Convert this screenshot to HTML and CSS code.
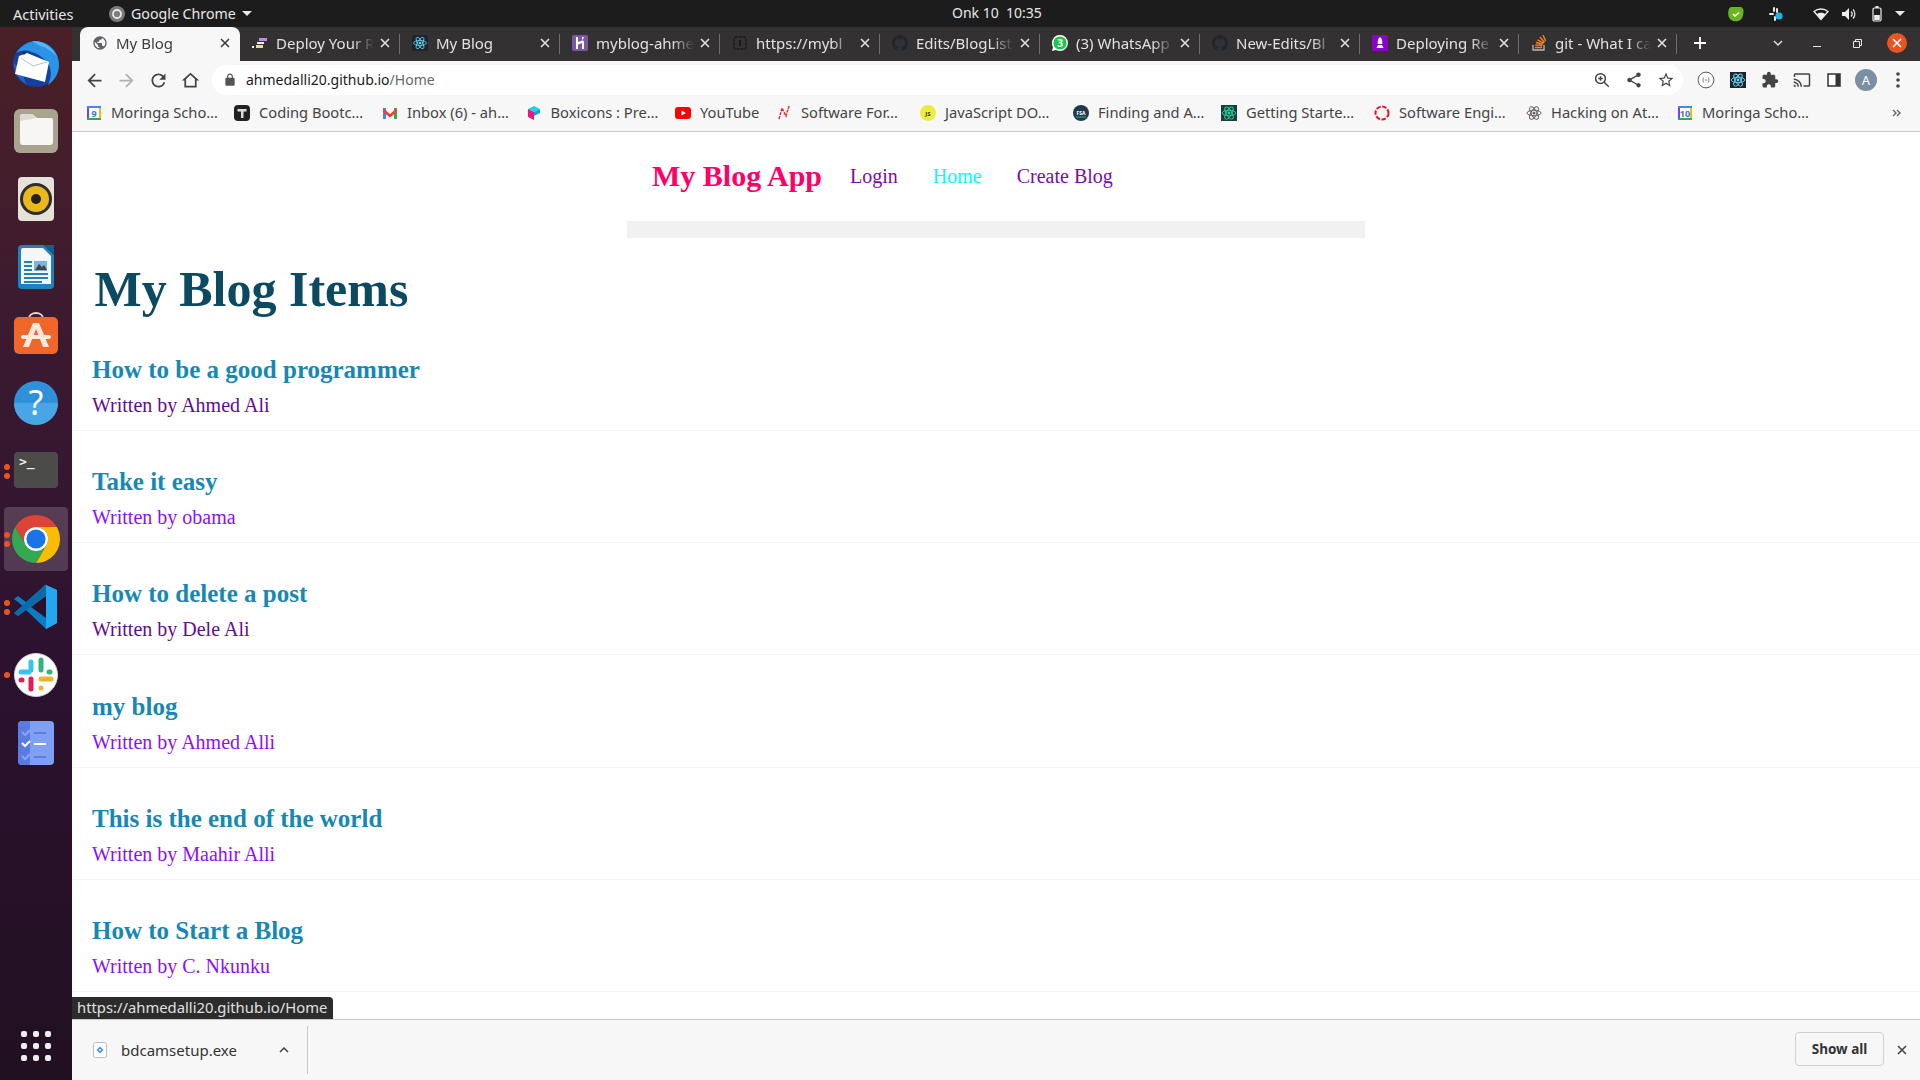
FILE: index.html
```html
<!DOCTYPE html>
<html lang="en">
<head>
<meta charset="utf-8">
<title>My Blog</title>
<link rel="stylesheet" href="styles.css">
</head>
<body>
<svg class="defs" width="0" height="0" aria-hidden="true">
  <symbol id="react" viewBox="0 0 16 16"><rect width="16" height="16" rx="2" fill="#20232a"/><g fill="none" stroke="#61dafb" stroke-width=".8"><ellipse cx="8" cy="8" rx="6.4" ry="2.5"/><ellipse cx="8" cy="8" rx="6.4" ry="2.5" transform="rotate(60 8 8)"/><ellipse cx="8" cy="8" rx="6.4" ry="2.5" transform="rotate(120 8 8)"/></g><circle cx="8" cy="8" r="1.3" fill="#61dafb"/></symbol>
  <symbol id="x" viewBox="0 0 10 10"><path d="M1 1l8 8M9 1L1 9" fill="none" stroke="currentColor" stroke-width="1.6"/></symbol>
  <symbol id="octo" viewBox="0 0 16 16"><path fill="#1d2730" d="M8 0C3.58 0 0 3.58 0 8c0 3.54 2.29 6.53 5.47 7.59.4.07.55-.17.55-.38 0-.19-.01-.82-.01-1.49-2.01.37-2.53-.49-2.69-.94-.09-.23-.48-.94-.82-1.13-.28-.15-.68-.52-.01-.53.63-.01 1.08.58 1.23.82.72 1.21 1.87.87 2.33.66.07-.52.28-.87.51-1.07-1.78-.2-3.64-.89-3.64-3.95 0-.87.31-1.59.82-2.15-.08-.2-.36-1.02.08-2.12 0 0 .67-.21 2.2.82.64-.18 1.32-.27 2-.27.68 0 1.36.09 2 .27 1.53-1.04 2.2-.82 2.2-.82.44 1.1.16 1.92.08 2.12.51.56.82 1.27.82 2.15 0 3.07-1.87 3.75-3.65 3.95.29.25.54.73.54 1.48 0 1.07-.01 1.93-.01 2.2 0 .21.15.46.55.38A8.013 8.013 0 0 0 16 8c0-4.42-3.58-8-8-8z"/></symbol>
  <symbol id="cal" viewBox="0 0 16 16"><rect x="1" y="1" width="14" height="14" fill="#fff"/><path d="M1 1h14v2H1z" fill="#4285f4"/><path d="M1 13h14v2H1z" fill="#34a853"/><path d="M13 3h2v10h-2z" fill="#fbbc04"/><path d="M1 3h2v10H1z" fill="#7b3ff2"/></symbol>
</svg>

<header class="topbar">
  <span class="activities">Activities</span>
  <span class="app-menu">
    <svg class="app-icon" viewBox="0 0 16 16"><circle cx="8" cy="8" r="8" fill="#7b7b7b"/><circle cx="8" cy="8" r="4" fill="none" stroke="#e8e8e8" stroke-width="1.8"/></svg>
    <span class="app-name">Google Chrome</span>
    <span class="caret"></span>
  </span>
  <time class="clock">Onk 10&nbsp;&nbsp;10:35</time>
  <span class="tray">
    <svg class="tray-green" viewBox="0 0 16 16"><path d="M3 1h9c2 0 4 2 3.5 5-.5 4-1 8-5.5 9-4 .8-8.5-.5-9.5-5C0 7 0 2 3 1z" fill="#6cb324"/><path d="M5 8l2 2 4-3.5" fill="none" stroke="#fff" stroke-width="1.6"/></svg>
    <svg class="tray-slack" viewBox="0 0 16 16"><g fill="#e8e8e8"><rect x="5" y="1" width="2" height="5" rx="1"/><rect x="1" y="7" width="5" height="2" rx="1"/><rect x="8" y="2" width="2" height="5" rx="1"/><rect x="6" y="10" width="2" height="5" rx="1"/></g><circle cx="11" cy="10" r="3.6" fill="#1cb6e8"/></svg>
    <svg class="tray-wifi" viewBox="0 0 16 14"><path d="M8 12.5L1 4.5C3 2.7 5.5 2 8 2s5 .7 7 2.5z" fill="none" stroke="#eee" stroke-width="1.3"/><path d="M8 12.5L3.8 7.2C5 6.2 6.5 5.8 8 5.8s3 .4 4.2 1.4z" fill="#eee"/></svg>
    <svg class="tray-vol" viewBox="0 0 16 16"><path d="M1 6h3l4-4v12l-4-4H1z" fill="#eee"/><path d="M10 5.5c1.4 1.4 1.4 3.6 0 5M12 3.5c2.5 2.5 2.5 6.5 0 9" fill="none" stroke="#eee" stroke-width="1.2"/></svg>
    <svg class="tray-bat" viewBox="0 0 10 16"><rect x="1" y="2" width="8" height="13" rx="1.2" fill="none" stroke="#eee" stroke-width="1.2"/><rect x="3.5" y="0" width="3" height="2" fill="#eee"/><rect x="2.2" y="9" width="5.6" height="5" fill="#eee"/></svg>
    <span class="caret tray-caret"></span>
  </span>
</header>

<div class="desktop">
  <nav class="dock">
    <div class="dock-item">
      <svg viewBox="0 0 48 48"><circle cx="24" cy="25" r="23" fill="#15409f"/><path d="M4 14C10 5 20 0 29 3c11 3 18 12 18 23 0 8-4 15-11 20 3-7 4-13 1-20-4-7-12-12-20-14-5-1-10 0-13 2z" fill="#2a93e6"/><path d="M20 2c11-1 21 6 25 16-5-6-12-10-17-11z" fill="#55b6f2"/><path d="M2 24c0 10 5 17 13 22-3-5-4-10-4-14z" fill="#1f63c8"/><path d="M7 17l8-3 22 9-4 20-30-8z" fill="#fff"/><path d="M9 19l12 8 14-4" fill="none" stroke="#aeb6c4" stroke-width=".9"/><circle cx="12" cy="14" r="1.6" fill="#0b2e78"/></svg>
    </div>
    <div class="dock-item">
      <svg viewBox="0 0 48 48"><rect x="2" y="2" width="44" height="44" rx="6" fill="#a9a48f"/><path d="M8 10a3 3 0 0 1 3-3h9l5 4h14a2 2 0 0 1 2 2v22a3 3 0 0 1-3 3H11a3 3 0 0 1-3-3z" fill="#f7f6f4"/><path d="M8 14l0-4a3 3 0 0 1 3-3h9l5 4z" fill="#dedad0"/></svg>
    </div>
    <div class="dock-item">
      <svg viewBox="0 0 48 48"><rect x="6" y="2" width="36" height="44" rx="4" fill="#e6e2d8"/><circle cx="24" cy="24" r="16" fill="#2e2e2e"/><circle cx="24" cy="24" r="13" fill="#e9b81c"/><circle cx="24" cy="24" r="5" fill="#222"/></svg>
    </div>
    <div class="dock-item">
      <svg viewBox="0 0 48 48"><path d="M10 2h22l10 10v30a4 4 0 0 1-4 4H10a4 4 0 0 1-4-4V6a4 4 0 0 1 4-4z" fill="#1e83b8"/><path d="M11 5h20l8 8v28H9V7a2 2 0 0 1 2-2z" fill="#f4f6f8"/><path d="M32 2h10v10z" fill="#135f8c"/><path fill="#1e83b8" d="M12 18h8v2h-8zM12 22h8v2h-8zM12 26h8v2h-8zM12 30h24v2H12zM12 34h24v2H12zM12 38h18v2H12z"/><rect x="22" y="18" width="13" height="10" fill="#7bb4dc"/><path d="M23 27l4-6 3 3 2-2 3 5z" fill="#444"/></svg>
    </div>
    <div class="dock-item">
      <svg viewBox="0 0 48 48"><path d="M17 8c0-8 14-8 14 0" fill="none" stroke="#f4d5b5" stroke-width="2"/><rect x="2" y="6" width="44" height="37" rx="5" fill="#f0662b"/><path d="M21 12h6l10 24h-6l-7-18-7 18h-6z" fill="#fde8dc"/><rect x="9" y="24" width="30" height="4" rx="2" fill="#fde8dc"/></svg>
    </div>
    <div class="dock-item">
      <svg viewBox="0 0 48 48"><circle cx="24" cy="24" r="22" fill="#2f8fd8"/><path d="M2 24a22 22 0 0 0 44 0z" fill="#48a5e6"/><text class="help-mark" x="24" y="36" text-anchor="middle">?</text></svg>
    </div>
    <div class="dock-item">
      <span class="dots dots-two"></span>
      <svg viewBox="0 0 48 48"><rect x="2" y="5" width="44" height="36" rx="4" fill="#4b4b49"/><text class="term-mark" x="7" y="19">&gt;_</text></svg>
    </div>
    <div class="dock-item active">
      <span class="dots dots-two"></span>
      <svg viewBox="0 0 48 48"><path fill="#db4437" d="M24 0a24 24 0 0 1 20.78 12H24a12 12 0 0 0-10.39 18L3.22 12A24 24 0 0 1 24 0z"/><path fill="#fbbc04" d="M44.78 12A24 24 0 0 1 24 48l10.39-18A12 12 0 0 0 24 12z"/><path fill="#34a853" d="M3.22 12A24 24 0 0 0 24 48l10.39-18a12 12 0 0 1-20.78 0z"/><circle cx="24" cy="24" r="12" fill="#fff"/><circle cx="24" cy="24" r="9.6" fill="#1a73e8"/></svg>
    </div>
    <div class="dock-item">
      <span class="dots dots-two"></span>
      <svg viewBox="0 0 48 48"><path d="M34 2l11 5v33l-11 6-20-19-8 6-4-3 9-7-9-7 4-3 8 6z" fill="#0a7cc4"/><path d="M34 2l11 5v33l-11 6z" fill="#23a7f0"/><path d="M34 13L19 24l15 11z" fill="#2c0f2c"/><path d="M6 33l-4-3 32-29v11z" fill="#0b6aa8"/></svg>
    </div>
    <div class="dock-item">
      <span class="dots dots-one"></span>
      <svg viewBox="0 0 48 48"><circle cx="24" cy="24" r="21.5" fill="#fff" stroke="#d9d4d9" stroke-width="1"/><g stroke-width="5" stroke-linecap="round" fill="none"><path d="M19 11v8" stroke="#36c5f0"/><path d="M9 21h8" stroke="#36c5f0"/><path d="M29 9v10" stroke="#2eb67d"/><path d="M38 21h-1" stroke="#2eb67d"/><path d="M29 28h10" stroke="#ecb22e"/><path d="M29 37v0" stroke="#ecb22e"/><path d="M19 28v10" stroke="#e01e5a"/><path d="M9 29h1" stroke="#e01e5a"/></g></svg>
    </div>
    <div class="dock-item">
      <svg viewBox="0 0 48 48"><rect x="6" y="2" width="36" height="44" rx="4" fill="#7f9ff2"/><path d="M10 2h8v44h-8a4 4 0 0 1-4-4V6a4 4 0 0 1 4-4z" fill="#5a7be0"/><g fill="none" stroke-width="2"><path d="M10 13l3 3 5-5M10 37l3 3 5-5" stroke="#8aa5ef"/><path d="M10 24l3 3 5-5" stroke="#fff"/></g><path d="M22 14h12M22 38h12" stroke="#5a7be0" stroke-width="2"/><path d="M22 25h12" stroke="#fff" stroke-width="2"/></svg>
    </div>
    <div class="dock-grid">
      <i></i><i></i><i></i><i></i><i></i><i></i><i></i><i></i><i></i>
    </div>
  </nav>

  <div class="browser">
    <div class="tabstrip">
      <div class="tab active-tab">
        <svg class="fav" viewBox="0 0 24 24"><path fill="#5f6368" d="M12 2C6.48 2 2 6.48 2 12s4.48 10 10 10 10-4.48 10-10S17.52 2 12 2zm-1 17.93c-3.95-.49-7-3.85-7-7.93 0-.62.08-1.21.21-1.79L9 15v1c0 1.1.9 2 2 2v1.93zm6.9-2.54c-.26-.81-1-1.39-1.9-1.39h-1v-3c0-.55-.45-1-1-1H8v-2h2c.55 0 1-.45 1-1V7h2c1.1 0 2-.9 2-2v-.41c2.93 1.19 5 4.06 5 7.41 0 2.08-.8 3.97-2.1 5.39z"/></svg>
        <span class="tab-title">My Blog</span>
        <svg class="tab-x"><use href="#x"/></svg>
      </div>
      <div class="tab">
        <svg class="fav" viewBox="0 0 16 16"><rect x="7" y="3" width="8" height="3" fill="#b58cf0"/><rect x="5" y="7" width="7" height="2" fill="#eee"/><rect x="4" y="10" width="7" height="3" fill="#e9d6a0"/><rect x="0" y="11" width="2" height="2" fill="#eee"/></svg>
        <span class="tab-title">Deploy Your R</span>
        <svg class="tab-x"><use href="#x"/></svg>
      </div>
      <div class="tab">
        <svg class="fav"><use href="#react"/></svg>
        <span class="tab-title">My Blog</span>
        <svg class="tab-x"><use href="#x"/></svg>
      </div>
      <div class="tab">
        <svg class="fav" viewBox="0 0 16 16"><rect width="16" height="16" rx="2" fill="#79589f"/><path d="M4 2h2v5l4-1.5c1-.3 2 .4 2 1.5v7h-2V8L6 9.5V14H4zM10 2h2l-1 2.5h-1z" fill="#fff"/></svg>
        <span class="tab-title">myblog-ahme</span>
        <svg class="tab-x"><use href="#x"/></svg>
      </div>
      <div class="tab">
        <svg class="fav" viewBox="0 0 16 16"><path d="M3 2h10l1 2v8l-1 2H3l-1-2V4z" fill="none" stroke="#111" stroke-width="1" stroke-dasharray="3 1"/><path d="M8 5v6" stroke="#111" stroke-width="1.5"/></svg>
        <span class="tab-title">https://mybl</span>
        <svg class="tab-x"><use href="#x"/></svg>
      </div>
      <div class="tab">
        <svg class="fav"><use href="#octo"/></svg>
        <span class="tab-title">Edits/BlogList</span>
        <svg class="tab-x"><use href="#x"/></svg>
      </div>
      <div class="tab">
        <svg class="fav" viewBox="0 0 16 16"><path d="M8 0a8 8 0 0 1 0 16c-1.5 0-2.8-.4-4-1l-4 1 1-4A8 8 0 0 1 8 0z" fill="#fff"/><circle cx="8" cy="8" r="6.6" fill="#19c84b"/><text class="wa-num" x="8" y="11.5" text-anchor="middle">3</text></svg>
        <span class="tab-title">(3) WhatsApp</span>
        <svg class="tab-x"><use href="#x"/></svg>
      </div>
      <div class="tab">
        <svg class="fav"><use href="#octo"/></svg>
        <span class="tab-title">New-Edits/Bl</span>
        <svg class="tab-x"><use href="#x"/></svg>
      </div>
      <div class="tab">
        <svg class="fav" viewBox="0 0 16 16"><rect width="16" height="16" fill="#8a05be"/><path d="M8 2c2 1.5 2.5 4 2.3 7H5.7C5.5 6 6 3.5 8 2zM6 10h4l1.5 3h-7z" fill="#fff"/></svg>
        <span class="tab-title">Deploying Re</span>
        <svg class="tab-x"><use href="#x"/></svg>
      </div>
      <div class="tab">
        <svg class="fav" viewBox="0 0 16 16"><path d="M2 10v5h11v-5" fill="none" stroke="#bcbbbb" stroke-width="1.3"/><path d="M4 12.5h7M4.3 10l7 .6M5 7.5l6.8 1.8M6.5 4.8l6.2 3.4M9 2l4.5 5.3M12 0l2.7 6" fill="none" stroke="#f48024" stroke-width="1.4"/></svg>
        <span class="tab-title">git - What I ca</span>
        <svg class="tab-x"><use href="#x"/></svg>
      </div>
      <svg class="new-tab" viewBox="0 0 12 12"><path d="M6 0v12M0 6h12" stroke="#fff" stroke-width="1.8"/></svg>
      <div class="win-controls">
        <svg class="win-chev" viewBox="0 0 10 6"><path d="M1 1l4 4 4-4" fill="none" stroke="#e8e8e8" stroke-width="1.3"/></svg>
        <span class="win-min"></span>
        <svg class="win-restore" viewBox="0 0 9 9"><path d="M.5 2.5h6v6h-6zM2.5 2.5v-2h6v6h-2" fill="none" stroke="#e8e8e8" stroke-width="1"/></svg>
        <span class="win-close"><svg viewBox="0 0 10 10"><use href="#x"/></svg></span>
      </div>
    </div>

    <div class="toolbar">
      <span class="tbtn nav-btn"><svg viewBox="0 0 24 24"><path fill="#444" d="M20 11H7.83l5.59-5.59L12 4l-8 8 8 8 1.41-1.41L7.83 13H20v-2z"/></svg></span>
      <span class="tbtn nav-btn"><svg viewBox="0 0 24 24"><path fill="#b0b0b0" d="M12 4l-1.41 1.41L16.17 11H4v2h12.17l-5.58 5.59L12 20l8-8z"/></svg></span>
      <span class="tbtn nav-btn"><svg viewBox="0 0 24 24"><path fill="#444" d="M17.65 6.35A7.96 7.96 0 0 0 12 4c-4.42 0-7.99 3.58-7.99 8s3.57 8 7.99 8c3.73 0 6.84-2.55 7.73-6h-2.08A5.99 5.99 0 0 1 12 18c-3.31 0-6-2.69-6-6s2.69-6 6-6c1.66 0 3.14.69 4.22 1.78L13 11h7V4l-2.35 2.35z"/></svg></span>
      <span class="tbtn nav-btn"><svg viewBox="0 0 24 24"><path fill="#444" fill-rule="evenodd" d="M12 3L2 12h3v8h14v-8h3L12 3zm0 2.7l5 4.5V18H7v-7.8l5-4.5z"/></svg></span>
      <div class="omnibox">
        <svg class="lock" viewBox="0 0 24 24"><path fill="#555" d="M18 8h-1V6c0-2.76-2.24-5-5-5S7 3.24 7 6v2H6c-1.1 0-2 .9-2 2v10c0 1.1.9 2 2 2h12c1.1 0 2-.9 2-2V10c0-1.1-.9-2-2-2zM9 8V6c0-1.66 1.34-3 3-3s3 1.34 3 3v2H9z"/></svg>
        <span class="url">ahmedalli20.github.io<span class="url-path">/Home</span></span>
        <span class="tbtn omni-first"><svg viewBox="0 0 24 24"><g fill="none" stroke="#444" stroke-width="2"><circle cx="10" cy="10" r="6.5"/><path d="M15 15l6 6M10 7v6M7 10h6"/></g></svg></span>
        <span class="tbtn"><svg viewBox="0 0 24 24"><path fill="#444" d="M18 16.08c-.76 0-1.44.3-1.96.77L8.91 12.7c.05-.23.09-.46.09-.7s-.04-.47-.09-.7l7.05-4.11c.54.5 1.25.81 2.04.81 1.66 0 3-1.34 3-3s-1.34-3-3-3-3 1.34-3 3c0 .24.04.47.09.7L8.04 9.81C7.5 9.31 6.79 9 6 9c-1.66 0-3 1.34-3 3s1.34 3 3 3c.79 0 1.5-.31 2.04-.81l7.12 4.16c-.05.21-.08.43-.08.65 0 1.61 1.31 2.92 2.92 2.92s2.92-1.31 2.92-2.92-1.31-2.92-2.92-2.92z"/></svg></span>
        <span class="tbtn"><svg viewBox="0 0 24 24"><path fill="#444" d="M22 9.24l-7.19-.62L12 2 9.19 8.63 2 9.24l5.46 4.73L5.82 21 12 17.27 18.18 21l-1.63-7.03L22 9.24zM12 15.4l-3.76 2.27 1-4.28-3.32-2.88 4.38-.38L12 6.1l1.71 4.04 4.38.38-3.32 2.88 1 4.28L12 15.4z"/></svg></span>
      </div>
      <div class="extensions">
        <span class="tbtn"><svg viewBox="0 0 24 24"><circle cx="12" cy="12" r="10.5" fill="#fff" stroke="#555" stroke-width="1.3"/><path d="M9.5 8.5c-1.5 0-1 3.5-2 3.5 1 0 .5 3.5 2 3.5M14.5 8.5c1.5 0 1 3.5 2 3.5-1 0-.5 3.5-2 3.5M10.5 12h3" fill="none" stroke="#555" stroke-width="1"/></svg></span>
        <span class="tbtn small-btn"><svg viewBox="0 0 16 16"><rect width="16" height="16" fill="#20232a"/><g fill="none" stroke="#61dafb" stroke-width=".9"><ellipse cx="8" cy="8" rx="6.8" ry="2.7"/><ellipse cx="8" cy="8" rx="6.8" ry="2.7" transform="rotate(60 8 8)"/><ellipse cx="8" cy="8" rx="6.8" ry="2.7" transform="rotate(120 8 8)"/></g><circle cx="8" cy="8" r="1.4" fill="#61dafb"/></svg></span>
        <span class="tbtn"><svg viewBox="0 0 24 24"><path fill="#444" d="M20.5 11H19V7c0-1.1-.9-2-2-2h-4V3.5C13 2.12 11.88 1 10.5 1S8 2.12 8 3.5V5H4c-1.1 0-1.99.9-1.99 2v3.8H3.5c1.49 0 2.7 1.21 2.7 2.7s-1.21 2.7-2.7 2.7H2V20c0 1.1.9 2 2 2h3.8v-1.5c0-1.49 1.21-2.7 2.7-2.7 1.49 0 2.7 1.21 2.7 2.7V22H17c1.1 0 2-.9 2-2v-4h1.5c1.38 0 2.5-1.12 2.5-2.5S21.88 11 20.5 11z"/></svg></span>
        <span class="tbtn"><svg viewBox="0 0 24 24"><path fill="#444" d="M21 3H3c-1.1 0-2 .9-2 2v3h2V5h18v14h-7v2h7c1.1 0 2-.9 2-2V5c0-1.1-.9-2-2-2zM1 18v3h3c0-1.66-1.34-3-3-3zm0-4v2c2.76 0 5 2.24 5 5h2c0-3.87-3.13-7-7-7zm0-4v2c4.97 0 9 4.03 9 9h2c0-6.08-4.93-11-11-11z"/></svg></span>
        <span class="tbtn"><svg viewBox="0 0 24 24"><rect x="3" y="3" width="18" height="18" fill="#333"/><rect x="5" y="5" width="9" height="14" fill="#fff"/></svg></span>
        <span class="tbtn"><span class="avatar">A</span></span>
        <span class="tbtn"><svg viewBox="0 0 24 24"><g fill="#444"><circle cx="12" cy="4" r="2.4"/><circle cx="12" cy="12" r="2.4"/><circle cx="12" cy="20" r="2.4"/></g></svg></span>
      </div>
    </div>

    <div class="bookmarks">
      <a class="bm"><svg viewBox="0 0 16 16"><use href="#cal"/><text class="cal-num" x="8" y="12" text-anchor="middle">9</text></svg><span>Moringa Scho…</span></a>
      <a class="bm"><svg viewBox="0 0 16 16"><rect width="16" height="16" rx="4" fill="#222"/><path d="M3.5 4h9v2.5h-3V13H7V6.5H3.5z" fill="#ddd"/></svg><span>Coding Bootc…</span></a>
      <a class="bm"><svg viewBox="0 0 16 16"><path d="M1 3h3v11H1z" fill="#4285f4"/><path d="M12 3h3v11h-3z" fill="#34a853"/><path d="M1 3l7 6 7-6v4l-7 5.5L1 7z" fill="#ea4335"/></svg><span>Inbox (6) - ah…</span></a>
      <a class="bm"><svg viewBox="0 0 16 16"><path d="M2 4l6-3 6 3-6 3z" fill="#19d3e8"/><path d="M2 4l6 3v8L2 12z" fill="#f0157d"/><path d="M8 7l6-3v4l-6 3z" fill="#0ea5c9"/></svg><span>Boxicons : Pre…</span></a>
      <a class="bm"><svg viewBox="0 0 16 16"><rect y="2" width="16" height="12" rx="3" fill="#f00"/><path d="M6.5 5.5L11 8l-4.5 2.5z" fill="#fff"/></svg><span>YouTube</span></a>
      <a class="bm"><svg viewBox="0 0 16 16"><path d="M3 14l3-11 4 8 3-10" fill="none" stroke="#e5322d" stroke-width="1.5" stroke-dasharray="3 1"/></svg><span>Software For…</span></a>
      <a class="bm"><svg viewBox="0 0 16 16"><circle cx="8" cy="8" r="8" fill="#ecec3f"/><text class="js-num" x="8" y="10.5" text-anchor="middle">JS</text></svg><span>JavaScript DO…</span></a>
      <a class="bm"><svg viewBox="0 0 16 16"><circle cx="8" cy="8" r="8" fill="#22384f"/><text class="js-num fsa" x="8" y="10" text-anchor="middle">FSA</text><path d="M3 12h10" stroke="#2bb673" stroke-width="1"/></svg><span>Finding and A…</span></a>
      <a class="bm"><svg viewBox="0 0 16 16"><rect width="16" height="16" fill="#1f3b3a"/><g fill="none" stroke="#1fd6a0" stroke-width=".9"><ellipse cx="8" cy="8" rx="6.8" ry="2.7"/><ellipse cx="8" cy="8" rx="6.8" ry="2.7" transform="rotate(60 8 8)"/><ellipse cx="8" cy="8" rx="6.8" ry="2.7" transform="rotate(120 8 8)"/></g><circle cx="8" cy="8" r="1.4" fill="#1fd6a0"/></svg><span>Getting Starte…</span></a>
      <a class="bm"><svg viewBox="0 0 16 16"><circle cx="8" cy="8" r="6.5" fill="none" stroke="#e6141e" stroke-width="2" stroke-dasharray="4.5 1.5"/></svg><span>Software Engi…</span></a>
      <a class="bm"><svg viewBox="0 0 16 16"><g fill="none" stroke="#6b5f5f" stroke-width="1"><ellipse cx="8" cy="8" rx="7" ry="2.8"/><ellipse cx="8" cy="8" rx="7" ry="2.8" transform="rotate(60 8 8)"/><ellipse cx="8" cy="8" rx="7" ry="2.8" transform="rotate(120 8 8)"/></g><circle cx="8" cy="8" r="1.5" fill="#6b5f5f"/></svg><span>Hacking on At…</span></a>
      <a class="bm"><svg viewBox="0 0 16 16"><use href="#cal"/><text class="cal-num" x="8" y="12" text-anchor="middle">10</text></svg><span>Moringa Scho…</span></a>
      <svg class="bm-more" viewBox="0 0 10 8"><path d="M1 1l3 3-3 3M5 1l3 3-3 3" fill="none" stroke="#666" stroke-width="1.4"/></svg>
    </div>

    <main class="page">
      <div class="site-nav">
        <div class="nav-row">
          <span class="brand">My Blog App</span>
          <a class="nav-link login">Login</a>
          <a class="nav-link home">Home</a>
          <a class="nav-link create">Create Blog</a>
        </div>
        <div class="nav-bar"></div>
      </div>
      <h1 class="page-title">My Blog Items</h1>
      <ul class="posts">
        <li class="post"><h2>How to be a good programmer</h2><p class="visited">Written by Ahmed Ali</p></li>
        <li class="post"><h2>Take it easy</h2><p>Written by obama</p></li>
        <li class="post"><h2>How to delete a post</h2><p class="visited">Written by Dele Ali</p></li>
        <li class="post"><h2>my blog</h2><p>Written by Ahmed Alli</p></li>
        <li class="post"><h2>This is the end of the world</h2><p>Written by Maahir Alli</p></li>
        <li class="post"><h2>How to Start a Blog</h2><p>Written by C. Nkunku</p></li>
      </ul>
    </main>

    <div class="status-bubble">https://ahmedalli20.github.io/Home</div>

    <footer class="shelf">
      <svg class="file-icon" viewBox="0 0 14 16"><rect x=".5" y=".5" width="13" height="15" rx="2" fill="#fff" stroke="#bbb"/><path d="M7 4.5l3.5 3.5L7 11.5 3.5 8z" fill="#4d90e8"/><circle cx="7" cy="8" r="1" fill="#fff"/></svg>
      <span class="file-name">bdcamsetup.exe</span>
      <svg class="file-caret" viewBox="0 0 10 6"><path d="M1 5l4-4 4 4" fill="none" stroke="#444" stroke-width="1.5"/></svg>
      <span class="shelf-sep"></span>
      <button class="show-all">Show all</button>
      <svg class="shelf-x"><use href="#x"/></svg>
    </footer>
  </div>
</div>
</body>
</html>
```

FILE: styles.css
```css
* { box-sizing: border-box; }
html, body { margin: 0; height: 100%; overflow: hidden; }
body {
  width: 1920px;
  height: 1080px;
  display: flex;
  flex-direction: column;
  font-family: "Noto Sans", "DejaVu Sans", sans-serif;
  background: #fff;
}
.defs { position: absolute; }
svg { display: block; flex: none; }

/* GNOME top bar */
.topbar {
  height: 27px;
  flex: none;
  background: #1c1c1c;
  color: #e8e8e8;
  display: flex;
  align-items: center;
  font-size: 14px;
  padding-left: 13px;
  position: relative;
}
.activities { width: 96px; font-size: 14.5px; }
.app-menu { display: flex; align-items: center; }
.app-icon { width: 16px; height: 16px; margin-right: 6px; }
.app-name { font-size: 14.2px; }
.caret {
  width: 0; height: 0;
  border-left: 5px solid transparent;
  border-right: 5px solid transparent;
  border-top: 5px solid #e8e8e8;
  margin-left: 6px;
}
.clock {
  position: absolute;
  left: 952px;
  top: 3px;
  white-space: nowrap;
}
.tray {
  position: absolute;
  right: 0; top: 0;
  height: 27px;
  display: flex;
  align-items: center;
}
.tray-green { width: 16px; height: 16px; margin-right: 24px; }
.tray-slack { width: 16px; height: 16px; margin-right: 29px; }
.tray-wifi { width: 16px; height: 14px; margin-right: 12px; }
.tray-vol { width: 16px; height: 16px; margin-right: 15px; }
.tray-bat { width: 10px; height: 16px; }
.tray-caret { margin-left: 13px; margin-right: 15px; }

.desktop { flex: 1; display: flex; min-height: 0; }

/* Dock */
.dock {
  width: 72px;
  flex: none;
  background: linear-gradient(180deg, #4a2027 0%, #3b1a30 30%, #2c1230 60%, #211021 100%);
  display: flex;
  flex-direction: column;
  align-items: center;
  padding-top: 2px;
  position: relative;
}
.dock-item {
  width: 64px;
  height: 68px;
  flex: none;
  display: flex;
  align-items: center;
  justify-content: center;
  position: relative;
  border-radius: 4px;
}
.dock-item svg { width: 48px; height: 48px; }
.dock-item.active { background: rgba(255, 255, 255, .17); height: 64px; margin: 2px 0; }
.dots { position: absolute; left: 0; top: 50%; width: 6px; }
.dots::before, .dots::after {
  content: "";
  position: absolute;
  left: 0;
  width: 6px; height: 6px;
  border-radius: 50%;
  background: #e95420;
}
.dots-two::before { top: -7px; }
.dots-two::after { top: 2px; }
.dots-one::before { top: -3px; }
.dots-one::after { display: none; }
.help-mark { font: 400 34px "Noto Sans", sans-serif; fill: #fff; }
.term-mark { font: 700 13px "DejaVu Sans Mono", monospace; fill: #eee; }
.dock-grid {
  margin-top: auto;
  margin-bottom: 19px;
  display: grid;
  grid-template-columns: repeat(3, 6px);
  gap: 6px;
}
.dock-grid i { width: 6px; height: 6px; background: #eee; border-radius: 2px; display: block; }

/* Browser */
.browser {
  flex: 1;
  min-width: 0;
  display: flex;
  flex-direction: column;
  position: relative;
}
.tabstrip {
  height: 34px;
  flex: none;
  background: #333132;
  display: flex;
  padding-left: 8px;
  align-items: stretch;
}
.tab {
  width: 160px;
  flex: none;
  display: flex;
  align-items: center;
  padding: 0 10px 2px 12px;
  color: #e2e2e2;
  font-size: 15px;
  position: relative;
}
.tab:nth-child(9) { width: 159px; }
.tab:nth-child(10) { width: 158px; }
.tab::after {
  content: "";
  position: absolute;
  right: 0; top: 7px; bottom: 7px;
  width: 1px;
  background: #6e6c6d;
}
.tab.active-tab {
  background: #f7f7f7;
  color: #3c3c3c;
  border-radius: 8px 8px 0 0;
}
.tab.active-tab::after { display: none; }
.fav { width: 16px; height: 16px; margin-right: 8px; }
.tab-title {
  flex: 1;
  min-width: 0;
  white-space: nowrap;
  overflow: hidden;
  -webkit-mask-image: linear-gradient(90deg, #000 calc(100% - 22px), transparent 100%);
  mask-image: linear-gradient(90deg, #000 calc(100% - 22px), transparent 100%);
}
.tab-x { width: 10px; height: 10px; margin-left: 6px; color: inherit; }
.new-tab { width: 12px; height: 12px; align-self: center; margin-left: 17px; margin-bottom: 2px; }
.win-controls { margin-left: auto; display: flex; align-items: center; padding-bottom: 2px; }
.win-chev { width: 10px; height: 6px; margin-right: 30px; }
.win-min { width: 8px; height: 1px; background: #e8e8e8; margin-top: 6px; margin-right: 31.5px; }
.win-restore { width: 9px; height: 9px; margin-right: 25.5px; }
.win-close {
  width: 20px; height: 20px;
  border-radius: 50%;
  background: #e95420;
  color: #fff;
  margin-right: 13px;
  display: flex;
  align-items: center;
  justify-content: center;
}
.win-close svg { width: 10px; height: 10px; }

.toolbar {
  height: 35px;
  flex: none;
  background: #f7f7f7;
  display: flex;
  align-items: flex-end;
  padding: 0 6px 1px;
}
.tbtn {
  width: 32px;
  height: 30px;
  flex: none;
  display: flex;
  align-items: center;
  justify-content: center;
}
.tbtn svg { width: 18px; height: 18px; }
.tbtn.nav-btn svg { width: 21px; height: 21px; }
.tbtn.small-btn svg { width: 16px; height: 16px; }
.omnibox {
  flex: 1;
  height: 30px;
  background: #fff;
  border-radius: 15px;
  margin-left: 6px;
  display: flex;
  align-items: center;
  padding-left: 11px;
  padding-right: 1px;
}
.lock { width: 14px; height: 14px; margin-right: 9px; }
.url { font-size: 14px; color: #1a1a1a; white-space: nowrap; margin-bottom: 1px; }
.url-path { color: #666; }
.omni-first { margin-left: auto; }
.extensions { display: flex; margin-left: 7px; }
.avatar {
  width: 22px; height: 22px;
  border-radius: 50%;
  background: #7b8fa3;
  color: #fff;
  font-size: 13px;
  display: flex;
  align-items: center;
  justify-content: center;
}

.bookmarks {
  height: 36px;
  flex: none;
  background: #f7f7f7;
  border-bottom: 1px solid #c9c9c9;
  display: flex;
  align-items: center;
  padding: 0 0 2px 14px;
  position: relative;
}
.bm {
  display: flex;
  align-items: center;
  gap: 9px;
  width: 148px;
  flex: none;
  font-size: 14.7px;
  color: #444;
  white-space: nowrap;
}
.bm span { margin-bottom: 2px; }
.bm svg { width: 16px; height: 16px; }
.bm:nth-child(3) { width: 143.5px; }
.bm:nth-child(4) { width: 149.5px; }
.bm:nth-child(5) { width: 101px; }
.bm:nth-child(6) { width: 144px; }
.bm:nth-child(7) { width: 153px; }
.bm:nth-child(8) { width: 148px; }
.bm:nth-child(9) { width: 153px; }
.bm:nth-child(10) { width: 152px; }
.bm:nth-child(11) { width: 151px; }
.bm-more { width: 10px; height: 8px; margin-left: auto; margin-right: 18px; }
.cal-num { font: 700 9px "Noto Sans", sans-serif; fill: #3f6fd8; }
.js-num { font: 700 6px "Noto Sans", sans-serif; fill: #333; }
.js-num.fsa { fill: #fff; font-size: 5px; }
.wa-num { font: 700 10px "Noto Sans", sans-serif; fill: #fff; }

/* Web page */
.page {
  flex: 1;
  min-height: 0;
  overflow: hidden;
  background: #fff;
  font-family: "Liberation Serif", serif;
}
.site-nav { width: 738px; margin: 0 auto; }
.nav-row {
  height: 89px;
  display: flex;
  align-items: center;
  padding-left: 25px;
  font-size: 20px;
}
.brand { color: #ff0066; font-size: 30px; font-weight: 700; margin-right: 28px; margin-bottom: 2px; }
.nav-link { margin-right: 35px; }
.login, .create { color: #7a0ca8; }
.home { color: #00ffff; }
.nav-bar { height: 16.5px; background: #f1f1f1; }
.page-title {
  margin: 23.5px 0 0 22.5px;
  font-size: 50px;
  font-weight: 700;
  line-height: 57.5px;
  color: #0b4a60;
}
.posts { list-style: none; margin: 0; padding: 0; }
.post {
  padding: 36.25px 20px 13px;
  border-bottom: 1px solid #f5f5f5;
}
.post h2 {
  margin: 0 0 10px;
  font-size: 25px;
  line-height: 29px;
  font-weight: 700;
  color: #1787b4;
}
.post p {
  margin: 0;
  font-size: 20px;
  line-height: 23px;
  color: #8a0fff;
}
.post p.visited { color: #640a96; }

.status-bubble {
  position: absolute;
  left: 0;
  bottom: 61px;
  width: 261px;
  height: 22px;
  background: #2c2c2c;
  color: #e0e0e0;
  font-size: 14.8px;
  line-height: 21px;
  padding-left: 5px;
  border-top-right-radius: 4px;
  white-space: nowrap;
}

.shelf {
  height: 61px;
  flex: none;
  background: #f7f7f7;
  border-top: 1px solid #c9c9c9;
  display: flex;
  align-items: center;
  padding-left: 21px;
  color: #333;
}
.file-icon { width: 14px; height: 16px; margin-right: 14px; }
.file-name { font-size: 15px; width: 158px; white-space: nowrap; }
.file-caret { width: 10px; height: 6px; margin-right: 18px; }
.shelf-sep { width: 1px; height: 48px; background: #c9c9c9; }
.show-all {
  margin-left: auto;
  margin-bottom: 2px;
  width: 89px;
  height: 34px;
  background: #f7f7f7;
  border: 1px solid #cfcfcf;
  border-radius: 4px;
  font: 700 13.5px "Noto Sans", sans-serif;
  color: #333;
  padding: 0;
}
.shelf-x { width: 10px; height: 10px; color: #444; margin-left: 13px; margin-right: 13px; }
```
